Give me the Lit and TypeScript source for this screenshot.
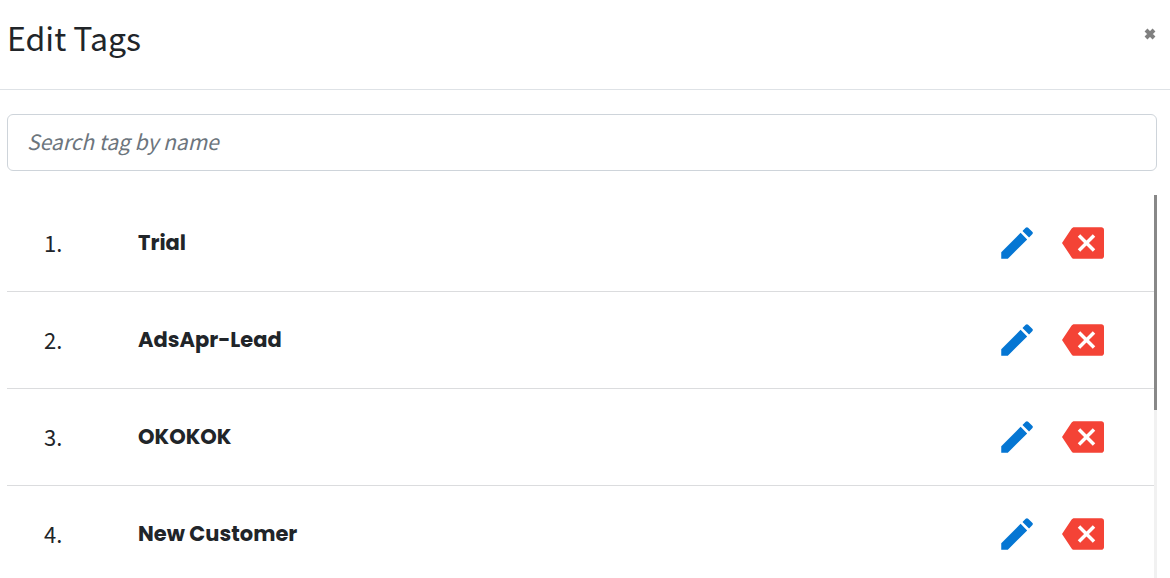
import { LitElement, html, css } from "lit";
import { customElement, property, query, state } from "lit/decorators.js";

interface Tag {
  id: number;
  name: string;
}

@customElement("tag-row")
class TagRow extends LitElement {
  @property({ type: Number }) index = 1;
  @property() name = "";

  static styles = css`
    :host {
      display: flex;
      align-items: center;
      padding: 27px 50px 27px 37px;
      border-bottom: 1px solid #dbdcde;
    }
    .index {
      flex: 0 0 94px;
      padding-bottom: 3px;
      font-size: 22px;
      line-height: 32px;
    }
    .name {
      flex: 1;
      min-width: 0;
      font-family: Poppins, Inter, "Liberation Sans", sans-serif;
      font-size: 21px;
      line-height: 32px;
      font-weight: 700;
    }
    .actions {
      display: flex;
      gap: 24px;
    }
    .action {
      display: block;
      padding: 0;
      border: 0;
      background: none;
      cursor: pointer;
    }
    .icon {
      display: block;
      width: 42px;
      height: 42px;
    }
    .edit {
      fill: #0576d3;
    }
    .remove {
      fill: #f44336;
    }
  `;

  render() {
    return html`
      <span class="index">${this.index}.</span>
      <span class="name">${this.name}</span>
      <div class="actions">
        <button class="action" type="button" aria-label="Edit ${this.name}">
          <svg class="icon edit" viewBox="0 0 24 24" aria-hidden="true">
            <path d="M3 17.25V21h3.75L17.81 9.94l-3.75-3.75L3 17.25zM20.71 7.04a1 1 0 0 0 0-1.41l-2.34-2.34a1 1 0 0 0-1.41 0l-1.83 1.83 3.75 3.75 1.83-1.83z" />
          </svg>
        </button>
        <button class="action" type="button" aria-label="Delete ${this.name}">
          <svg class="icon remove" viewBox="0 0 24 24" aria-hidden="true">
            <path d="M22.5 3H7c-.69 0-1.23.35-1.59.88L0 12l5.41 8.11c.36.53.9.89 1.59.89h15.5c.83 0 1.5-.67 1.5-1.5v-15c0-.83-.67-1.5-1.5-1.5zM19 15.59L17.59 17 14 13.41 10.41 17 9 15.59 12.59 12 9 8.41 10.41 7 14 10.59 17.59 7 19 8.41 15.41 12 19 15.59z" />
          </svg>
        </button>
      </div>
    `;
  }
}

@customElement("app-root")
class AppRoot extends LitElement {
  @state() private term = "";
  @state() private scrolled = 0;
  @query(".list") private list!: HTMLElement;

  private tags: Tag[] = [
    { id: 1, name: "Trial" },
    { id: 2, name: "AdsApr-Lead" },
    { id: 3, name: "OKOKOK" },
    { id: 4, name: "New Customer" },
  ];

  static styles = css`
    :host {
      display: flex;
      flex-direction: column;
      height: 100vh;
      overflow: hidden;
      box-sizing: border-box;
      background: #fff;
      color: #212529;
      font-family: "Source Sans Pro", "Noto Sans CJK SC", "Noto Sans", sans-serif;
    }
    .header {
      display: flex;
      align-items: flex-start;
      justify-content: space-between;
      padding: 13px 14px 28px 7px;
      border-bottom: 1px solid #dee2e6;
    }
    .title {
      margin: 0;
      font-size: 32px;
      line-height: 48px;
      font-weight: 400;
    }
    .close {
      padding: 15px 0;
      border: 0;
      background: none;
      cursor: pointer;
    }
    .close-icon {
      display: block;
      width: 12px;
      height: 12px;
      stroke: #808080;
      stroke-width: 4;
    }
    .body {
      display: flex;
      flex-direction: column;
      flex: 1;
      min-height: 0;
      gap: 24px;
      padding: 24px 13px 0 7px;
    }
    .search {
      flex: none;
      width: 100%;
      height: 57px;
      box-sizing: border-box;
      padding: 0 19px 3px;
      border: 1px solid #ced4da;
      border-radius: 6px;
      outline: none;
      background: #fff;
      color: inherit;
      font: inherit;
      font-size: 21px;
    }
    .search::placeholder {
      color: #6c757d;
      font-style: italic;
      opacity: 1;
    }
    .scroller {
      display: flex;
      flex: 1;
      min-height: 0;
    }
    .list {
      flex: 1;
      min-width: 0;
      overflow-y: auto;
      scrollbar-width: none;
    }
    .spacer {
      height: 291px;
    }
    .track {
      flex: 0 0 3px;
      display: flex;
      flex-direction: column;
      background: #f1f1f1;
    }
    .thumb {
      height: calc(100% * 9 / 16);
      background: #888;
    }
  `;

  private onSearch(event: Event) {
    this.term = (event.target as HTMLInputElement).value;
  }

  private onScroll() {
    const range = this.list.scrollHeight - this.list.clientHeight;
    this.scrolled = range > 0 ? this.list.scrollTop / range : 0;
  }

  render() {
    const term = this.term.toLowerCase();
    const shown = this.tags.filter((tag) => tag.name.toLowerCase().includes(term));
    return html`
      <header class="header">
        <h1 class="title">Edit Tags</h1>
        <button class="close" type="button" aria-label="Close">
          <svg class="close-icon" viewBox="0 0 12 12" aria-hidden="true">
            <path d="M2 2l8 8M10 2l-8 8" />
          </svg>
        </button>
      </header>
      <main class="body">
        <input
          class="search"
          type="text"
          aria-label="Search tag by name"
          placeholder="Search tag by name"
          .value=${this.term}
          @input=${this.onSearch}
        />
        <div class="scroller">
          <div class="list" @scroll=${this.onScroll}>
            ${shown.map((tag) => html`<tag-row .index=${tag.id} .name=${tag.name}></tag-row>`)}
            <div class="spacer"></div>
          </div>
          <div class="track">
            <div style="flex-grow: ${this.scrolled}"></div>
            <div class="thumb"></div>
            <div style="flex-grow: ${1 - this.scrolled}"></div>
          </div>
        </div>
      </main>
    `;
  }
}
